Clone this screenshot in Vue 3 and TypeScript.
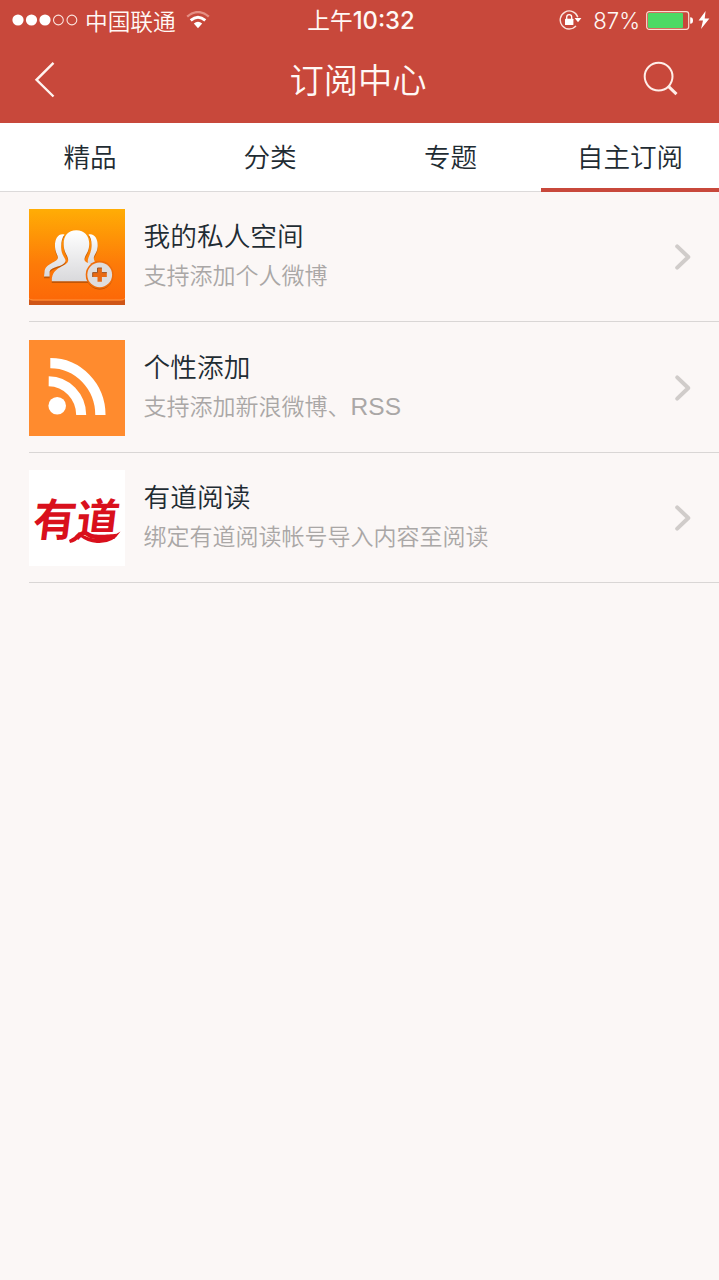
<script setup lang="ts">
interface Entry {
  icon: 'people' | 'rss' | 'youdao'
  title: string
  note: string
  latin?: string
}

const tabs: string[] = ['精品', '分类', '专题', '自主订阅']
const activeTab = 3

const entries: Entry[] = [
  { icon: 'people', title: '我的私人空间', note: '支持添加个人微博' },
  { icon: 'rss', title: '个性添加', note: '支持添加新浪微博、', latin: 'RSS' },
  { icon: 'youdao', title: '有道阅读', note: '绑定有道阅读帐号导入内容至阅读' },
]
</script>

<template>
  <div class="screen">
    <header class="header">
      <div class="status">
        <div class="status-left">
          <svg class="signal" width="66" height="12" viewBox="0 0 66 12">
            <circle cx="6" cy="6" r="5.6" fill="#fff" />
            <circle cx="19.5" cy="6" r="5.6" fill="#fff" />
            <circle cx="33" cy="6" r="5.6" fill="#fff" />
            <circle cx="46.4" cy="6" r="4.9" fill="none" stroke="#fbe3dd" stroke-width="1.1" />
            <circle cx="59.9" cy="6" r="4.9" fill="none" stroke="#fbe3dd" stroke-width="1.1" />
          </svg>
          <span class="carrier">中国联通</span>
          <svg class="wifi" width="24" height="18" viewBox="0 0 24 18">
            <path d="M1.2 5.6 Q12 -3.4 22.8 5.6" fill="none" stroke="#e58f84" stroke-width="2.4" />
            <path d="M4.7 9.4 Q12 3.2 19.3 9.4" fill="none" stroke="#fff" stroke-width="2.9" />
            <path d="M7.8 12.6 Q12 9.1 16.2 12.6 L12 17.2Z" fill="#fff" />
          </svg>
        </div>
        <div class="clock">上午<span class="digits">10:32</span></div>
        <div class="status-right">
          <svg class="lock" width="23" height="20" viewBox="0 0 23 20">
            <path d="M18.8 7.2 A9 9 0 1 0 17 15.9" fill="none" stroke="#fbe3dd" stroke-width="1.4" />
            <path d="M15.6 8 H22.4 L19 12.2Z" fill="#fff" />
            <rect x="6" y="8.7" width="8.4" height="6.3" rx=".6" fill="#fff" />
            <path d="M7.7 9 V7.2 A2.5 2.5 0 0 1 12.7 7.2 V9" fill="none" stroke="#fff" stroke-width="1.3" />
          </svg>
          <span class="percent">87%</span>
          <svg class="battery" width="48" height="19" viewBox="0 0 48 19">
            <rect x=".7" y=".7" width="42" height="17.6" rx="2.5" fill="none" stroke="#fbdcd2" stroke-width="1.2" />
            <rect x="2" y="2" width="35" height="15" rx="1" fill="#4cd964" />
            <path d="M44.2 6.3 Q47 6.3 47 9.5 Q47 12.7 44.2 12.7Z" fill="#fff" />
          </svg>
          <svg class="bolt" width="12" height="18" viewBox="0 0 12 18">
            <path d="M7.6 0 L.6 9.6 H5 L3 18 L11.4 7.4 H6.7Z" fill="#fff" />
          </svg>
        </div>
      </div>
      <div class="nav">
        <svg class="back" width="22" height="38" viewBox="0 0 22 38">
          <path d="M19.5 2.8 L2.5 19.8 L19.5 36.5" fill="none" stroke="#fff4f0" stroke-width="2.4" />
        </svg>
        <h1 class="heading">订阅中心</h1>
        <svg class="search" width="36" height="36" viewBox="0 0 36 36">
          <circle cx="15.6" cy="15.6" r="13.9" fill="none" stroke="#ffeee9" stroke-width="2" />
          <path d="M25.4 25.4 L33.5 33.2" fill="none" stroke="#ffeee9" stroke-width="3" />
        </svg>
      </div>
    </header>

    <nav class="tabs">
      <div v-for="(tab, i) in tabs" :key="tab" class="tab" :class="{ active: i === activeTab }">{{ tab }}</div>
    </nav>

    <main class="list">
      <div v-for="entry in entries" :key="entry.title" class="row">
        <svg v-if="entry.icon === 'people'" class="icon" viewBox="0 0 96 96">
          <defs>
            <linearGradient id="tile" x1="0" y1="0" x2="0" y2="1">
              <stop offset="0" stop-color="#ffad05" />
              <stop offset=".6" stop-color="#fd7b08" />
              <stop offset="1" stop-color="#fc6808" />
            </linearGradient>
            <linearGradient id="silver" x1="0" y1="0" x2="0" y2="1">
              <stop offset="0" stop-color="#fff" />
              <stop offset="1" stop-color="#d9d9dc" />
            </linearGradient>
            <g id="folk">
              <path d="M35.5 25.5 C29 24 25.6 30 26 38 C26.2 43 28.6 45.5 28.9 48.5 C29 54 16.5 53.5 15.5 63 L15 67.6 H20.6 V62.4 C22 57.5 35 58 36.6 52 C36.6 49 32.5 46.5 32.2 39 C32 33 33 29 35.5 25.5Z" />
              <path d="M59.5 25.5 C66 24 69.3 31 68.6 38 C68.3 43.5 65 45.5 64.8 49 C64.9 51.5 66 53 67.2 54 L59 54.2 C57.6 49 62 46 62.5 38 C62.8 32 62 29 59.5 25.5Z" />
              <path d="M47.3 21.3 C38.6 21.3 34.2 27.5 34.7 36 C34.9 43.8 39 46.3 39.2 51 C39 58.5 22.3 56.5 22.8 72.3 H59 C56.8 63 61 57 65 55 C60.5 54 55.8 54 55.5 50.5 C55.6 46 59.8 44 60.2 36 C60.7 27.5 55.8 21.3 47.3 21.3Z" />
            </g>
          </defs>
          <rect width="96" height="96" fill="#cf5617" />
          <path d="M0 0 H96 V90 Q95 91.5 92 91.5 H4 Q1 91.5 0 90Z" fill="url(#tile)" />
          <path d="M0 89.5 Q1 91 4 91 H92 Q95 91 96 89.5" fill="none" stroke="#ff9540" stroke-width="1" />
          <use href="#folk" fill="#a84a05" opacity=".7" transform="translate(0 1.6)" />
          <use href="#folk" fill="url(#silver)" />
          <circle cx="70.7" cy="67.2" r="13.2" fill="#b75008" />
          <circle cx="70.7" cy="65.8" r="14" fill="#ef6d0a" />
          <circle cx="70.7" cy="65.8" r="12.4" fill="#dfdddd" />
          <path d="M68.5 59 H72.9 V63.6 H77.8 V68 H72.9 V72.7 H68.5 V68 H63.7 V63.6 H68.5Z" fill="#e96a12" />
          <path d="M68.5 63.6 V59 H72.9 M63.7 68 V63.6 H68.5 M72.9 63.6 H77.8" fill="none" stroke="#9c5527" stroke-width="1" />
        </svg>

        <svg v-else-if="entry.icon === 'rss'" class="icon" viewBox="0 0 96 96">
          <rect width="96" height="96" fill="#ff8b2e" />
          <circle cx="28.2" cy="65.7" r="8.8" fill="#fff" />
          <path d="M19.7 41.2 A32.8 34 0 0 1 52.2 75" fill="none" stroke="#fff" stroke-width="10" />
          <path d="M21.3 23.1 A50 52 0 0 1 71.4 75" fill="none" stroke="#fff" stroke-width="10.3" />
        </svg>

        <div v-else class="icon youdao">
          <span class="brand">有道</span>
          <svg class="swash" viewBox="0 0 96 96">
            <path d="M40 70 Q46 67 50 62 Q58 69 70 68.6 Q82 68 91.5 61.5 Q84 74 68 73 Q58 72 51 66.5 Q47 72 41 73Z" fill="#d9101c" />
          </svg>
        </div>

        <div class="body">
          <div class="title">{{ entry.title }}</div>
          <div class="note">{{ entry.note }}<span v-if="entry.latin" class="latin">{{ entry.latin }}</span></div>
        </div>
        <svg class="chevron" width="18" height="28" viewBox="0 0 18 28">
          <path d="M3.2 3.4 L14.3 14 L3.2 24.6" fill="none" stroke="#d0ccca" stroke-width="4" stroke-linecap="round" stroke-linejoin="round" />
        </svg>
      </div>
    </main>
  </div>
</template>

<style>
body {
  margin: 0;
  background: #fbf7f6;
}
</style>

<style scoped>
.screen {
  width: 719px;
  height: 1280px;
  overflow: hidden;
  background: #fbf7f6;
  color: #1f2c33;
  font-family: "Noto Sans CJK SC", sans-serif;
  font-weight: 350;
}
.header {
  height: 123px;
  background: #c8483b;
  color: #fff8f5;
}
.status {
  display: grid;
  grid-template-columns: 1fr auto 1fr;
  height: 39px;
  align-items: center;
  font-size: 22.7px;
  line-height: 39px;
}
.status-left,
.status-right {
  display: flex;
  align-items: center;
}
.status-left {
  padding-left: 12px;
}
.status-right {
  justify-content: flex-end;
  padding-right: 9px;
}
.carrier {
  margin-left: 7px;
}
.wifi {
  margin-left: 10px;
}
.clock {
  padding-left: 3px;
  font-weight: 400;
}
.digits {
  font-family: Inter, sans-serif;
  font-weight: 500;
  font-size: 23.8px;
}
.percent {
  margin: 0 6px 0 11px;
  font-family: Inter, sans-serif;
  font-weight: 300;
  font-size: 22.2px;
}
.bolt {
  margin-left: 4px;
}
.nav {
  display: flex;
  height: 80px;
  padding: 0 40px 0 34px;
  align-items: center;
  justify-content: space-between;
}
.heading {
  margin: 0 0 0 17px;
  font-size: 34.3px;
  line-height: 78px;
  height: 80px;
  font-weight: 350;
}
.tabs {
  display: grid;
  grid-template-columns: 180px 180px 181px 178px;
  height: 69px;
  background: #fff;
}
.tab {
  box-sizing: border-box;
  height: 69px;
  border-bottom: 1px solid #dcdada;
  font-size: 26.6px;
  line-height: 65px;
  text-align: center;
}
.active {
  border-bottom: 4px solid #c8483b;
}
.row {
  display: flex;
  box-sizing: border-box;
  height: 130.4px;
  margin-left: 29px;
  padding: 17.2px 27px 0 0;
  align-items: flex-start;
  border-bottom: 1px solid #d9d6d5;
}
.icon {
  flex: none;
  width: 96px;
  height: 96px;
}
.youdao {
  position: relative;
  background: #fff;
}
.brand {
  display: block;
  width: 96px;
  color: #d9101c;
  font-size: 43px;
  font-weight: 700;
  line-height: 92px;
  text-align: center;
  transform: skewX(-7deg) scaleY(1.03);
}
.swash {
  position: absolute;
  inset: 0;
}
.body {
  flex: 1;
  margin-left: 18.6px;
}
.title {
  height: 47px;
  font-size: 26.7px;
  line-height: 51px;
}
.note {
  color: #aaa7a6;
  font-size: 23px;
  line-height: 36px;
}
.latin {
  font-family: "Liberation Sans", sans-serif;
  font-size: 24.5px;
}
.chevron {
  margin-top: 34px;
}
</style>
